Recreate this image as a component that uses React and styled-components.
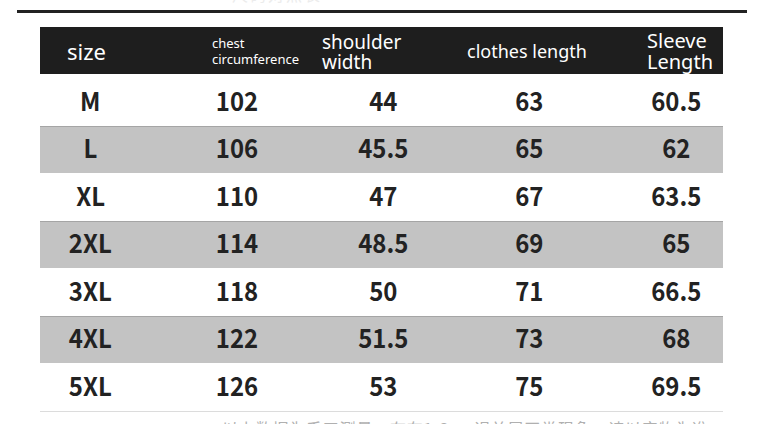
import React from 'react'
import styled, { createGlobalStyle } from 'styled-components'

const GlobalStyle = createGlobalStyle`
  html, body {
    margin: 0;
    padding: 0;
    background: #fff;
  }
  body {
    font-family: "Noto Sans", "Noto Sans CJK SC", sans-serif;
  }
`

const Page = styled.div`
  width: 769px;
  height: 424px;
  overflow: hidden;
  background: #fff;
`

const Caption = styled.div`
  height: 10px;
  overflow: hidden;
  padding-left: 232px;
  color: #ececec;
  font-size: 16px;
  line-height: 16px;

  span {
    display: block;
    margin-top: -13px;
    letter-spacing: 2px;
  }
`

const Rule = styled.div`
  height: 3px;
  margin: 0 22px 0 17px;
  background: #222;
`

const Table = styled.div`
  width: 683px;
  margin: 14px 0 0 40px;
`

const Header = styled.div`
  height: 47px;
  background: #1e1e1e;
  color: #fff;
  display: grid;
  grid-template-columns: 145px 110px 145px 180px 1fr;
  align-items: center;
  padding-left: 27px;
  box-sizing: border-box;
  font-family: "Noto Sans", sans-serif;
  font-weight: 400;
`

const HeadCell = styled.div`
  font-size: ${p => p.size}px;
  line-height: ${p => p.lh || 1};
  padding-top: ${p => p.top || 0}px;
`

const Body = styled.div`
  margin-top: 4px;
`

const Row = styled.div`
  height: 47.5px;
  background: ${p => (p.shaded ? '#c3c3c3' : '#fff')};
  box-shadow: ${p => (p.shaded ? 'inset 0 1px 0 #a5a5a5' : 'none')};
`

const Cells = styled.div`
  width: 733px;
  height: 100%;
  margin-left: -23px;
  display: grid;
  grid-template-columns: repeat(5, 146.5px);
  align-items: center;
  justify-items: center;
  font-family: "Noto Sans CJK SC", "Noto Sans", sans-serif;
  font-weight: 700;
  font-size: 26px;
  line-height: 1;
  color: #222;
`

const Value = styled.span`
  display: inline-block;
  transform: translateY(-2px) scaleX(0.92);
`

const BottomLine = styled.div`
  height: 1px;
  background: #dcdcdc;
`

const Note = styled.div`
  margin-top: 6px;
  padding-left: 222px;
  font-family: "Noto Sans CJK SC", sans-serif;
  font-size: 16px;
  line-height: 20px;
  color: #b0b0b0;
  white-space: nowrap;
  letter-spacing: 0.8px;
`

const rows = [
  ['M', '102', '44', '63', '60.5'],
  ['L', '106', '45.5', '65', '62'],
  ['XL', '110', '47', '67', '63.5'],
  ['2XL', '114', '48.5', '69', '65'],
  ['3XL', '118', '50', '71', '66.5'],
  ['4XL', '122', '51.5', '73', '68'],
  ['5XL', '126', '53', '75', '69.5'],
]

export default function App() {
  return (
    <Page>
      <GlobalStyle />
      <Caption><span>尺码对照表</span></Caption>
      <Rule />
      <Table>
        <Header>
          <HeadCell size={22}>size</HeadCell>
          <HeadCell size={13} lh={1.2} top={2}>chest<br />circumference</HeadCell>
          <HeadCell size={19} lh={1.05} top={4}>shoulder<br />width</HeadCell>
          <HeadCell size={18}>clothes length</HeadCell>
          <HeadCell size={20} lh={1.05}>Sleeve<br />Length</HeadCell>
        </Header>
        <Body>
          {rows.map((r, i) => (
            <Row key={r[0]} shaded={i % 2 === 1}>
              <Cells>
                {r.map((v, j) => (
                  <Value key={j}>{v}</Value>
                ))}
              </Cells>
            </Row>
          ))}
        </Body>
        <BottomLine />
      </Table>
      <Note>以上数据为手工测量，存在1-3cm误差属正常现象，请以实物为准</Note>
    </Page>
  )
}
